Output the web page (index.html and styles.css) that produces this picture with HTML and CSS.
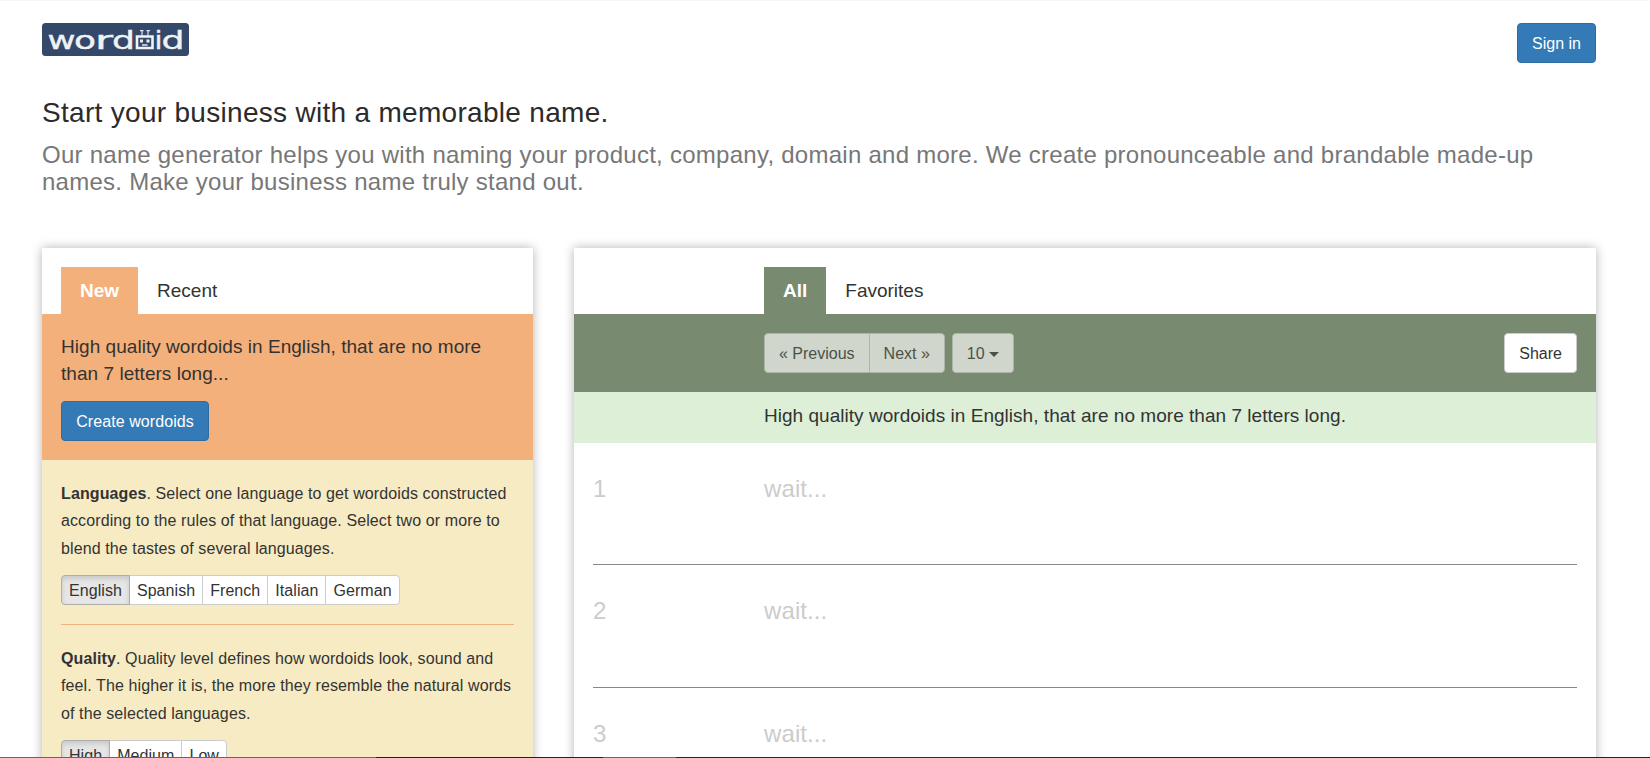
FILE: index.html
```html
<!DOCTYPE html>
<html lang="en">
<head>
<meta charset="utf-8">
<title>Wordoid</title>
<link rel="stylesheet" href="styles.css">
</head>
<body>
<div class="page">
  <header class="header">
    <svg class="logo" width="148" height="34" viewBox="0 0 148 34" role="img" aria-label="wordoid">
      <rect width="147" height="33" rx="3.5" fill="#34496a"/>
      <g class="logo-text">
        <text x="5.5" y="26" textLength="28" lengthAdjust="spacingAndGlyphs">w</text>
        <text x="32" y="26" textLength="22" lengthAdjust="spacingAndGlyphs">o</text>
        <text x="53" y="26" textLength="18" lengthAdjust="spacingAndGlyphs">r</text>
        <text x="70" y="26" textLength="23" lengthAdjust="spacingAndGlyphs">d</text>
        <text x="112.500" y="26" textLength="8" lengthAdjust="spacingAndGlyphs">i</text>
        <text x="119.500" y="26" textLength="23" lengthAdjust="spacingAndGlyphs">d</text>
      </g>
      <g class="robot">
        <path d="M95 13.500H110.500V25H95Z" fill="none" stroke="#f0f2f5" stroke-width="2.600"/>
        <path d="M98 7.700h3.500M104.500 7.700h3.500M100 8v5M106 8v5" fill="none" stroke="#dfe4ea" stroke-width="1.200"/>
        <path d="M98 16.500h3v3h-3zM104.500 16.500h3v3h-3zM100 21.300h5.500v1.500h-5.500z" fill="#e8ebef"/>
      </g>
    </svg>
    <button class="btn btn-primary">Sign in</button>
  </header>
  <section class="intro">
    <h1>Start your business with a memorable name.</h1>
    <h2>Our name generator helps you with naming your product, company, domain and more. We create pronounceable and brandable made-up names. Make your business name truly stand out.</h2>
  </section>
  <main class="columns">
    <section class="panel creator">
      <nav class="tabs"><a class="tab active">New</a><a class="tab">Recent</a></nav>
      <div class="summary">
        <p>High quality wordoids in English, that are no more than 7 letters long...</p>
        <button class="btn btn-primary">Create wordoids</button>
      </div>
      <div class="options">
        <div class="option">
          <p><b>Languages</b>. Select one language to get wordoids constructed according to the rules of that language. Select two or more to blend the tastes of several languages.</p>
          <div class="group small"><button class="btn pressed">English</button><button class="btn">Spanish</button><button class="btn">French</button><button class="btn">Italian</button><button class="btn">German</button></div>
        </div>
        <div class="option">
          <p><b>Quality</b>. Quality level defines how wordoids look, sound and feel. The higher it is, the more they resemble the natural words of the selected languages.</p>
          <div class="group small"><button class="btn pressed">High</button><button class="btn">Medium</button><button class="btn">Low</button></div>
        </div>
      </div>
    </section>
    <section class="panel results">
      <nav class="tabs"><a class="tab active">All</a><a class="tab">Favorites</a></nav>
      <div class="toolbar">
        <div class="group disabled"><button class="btn">« Previous</button><button class="btn">Next »</button></div>
        <button class="btn disabled">10 <span class="caret"></span></button>
        <button class="btn share">Share</button>
      </div>
      <div class="caption">High quality wordoids in English, that are no more than 7 letters long.</div>
      <div class="list">
        <div class="row"><span>1</span><span>wait...</span></div>
        <div class="row"><span>2</span><span>wait...</span></div>
        <div class="row"><span>3</span><span>wait...</span></div>
      </div>
    </section>
  </main>
</div>
<div class="bottom-edge"></div>
</body>
</html>
```
FILE: styles.css
```css
* { box-sizing: border-box; }
html, body { height: 758px; overflow: hidden; }
body { margin: 0; background: #fff; color: #333; font: 16px/27px "Liberation Sans", Arial, sans-serif; }
p, h1, h2 { margin: 0; font-weight: normal; }
.page { height: 757px; overflow: hidden; border-top: 1px solid #f7f7f7; padding: 22px 54px 0 42px; }
.header { display: flex; justify-content: space-between; align-items: flex-start; height: 73px; }
.logo { display: block; }
.logo-text { font: 25px "DejaVu Sans", sans-serif; fill: #f0f2f5; stroke: #f0f2f5; stroke-width: .4px; }
.btn { height: 40px; padding: 1px 14px 0; border: 1px solid #ccc; border-radius: 4px; background: #fff; color: #333; font: 16px/25px "Liberation Sans", Arial, sans-serif; white-space: nowrap; }
.btn-primary { background: #337ab7; border-color: #2e6da4; color: #fff; }
.summary .btn { width: 148px; padding: 1px 0 0; letter-spacing: .08px; }
.intro h1 { font-size: 28px; line-height: 34px; letter-spacing: .3px; color: #2b2b2b; }
.intro h2 { margin-top: 11px; font-size: 24px; line-height: 27px; letter-spacing: .26px; color: #777; }
.columns { display: grid; grid-template-columns: 491px 1022px; gap: 41px; margin-top: 53px; }
.panel { height: 620px; background: #fff; box-shadow: 0 0 10px rgba(0, 0, 0, .3); }
.tabs { display: flex; height: 66px; padding: 19px 19px 0; font-size: 19px; }
.results .tabs { padding-left: 190px; }
.tab { height: 47px; padding: 0 19px; line-height: 48px; }
.active { color: #fff; font-weight: bold; }
.creator .active { background: #f4b07a; }
.results .active { background: #788a6f; }
.summary { height: 146px; padding: 19px; background: #f4b07a; font-size: 19px; letter-spacing: .04px; }
.summary p { margin-bottom: 14px; }
.options { height: 420px; padding: 20px 19px; background: #f7ebc3; }
.option { height: 145px; border-bottom: 1px solid #f4b07a; margin-bottom: 20px; }
.option p { height: 81px; margin-bottom: 14px; line-height: 27.3px; letter-spacing: .105px; }
.group { display: flex; }
.group .btn + .btn { margin-left: -1px; border-top-left-radius: 0; border-bottom-left-radius: 0; }
.group .btn:not(:last-child) { border-top-right-radius: 0; border-bottom-right-radius: 0; }
.small .btn { height: 30px; padding: 1px 7px 0; letter-spacing: .06px; }
.group .pressed { position: relative; background: #e6e6e6; border-color: #adadad; box-shadow: inset 0 3px 5px rgba(0, 0, 0, .125); }
.toolbar { display: flex; gap: 7px; height: 78px; padding: 19px 19px 19px 190px; background: #788a6f; }
.disabled { opacity: .65; }
.share { margin-left: auto; }
.caret { display: inline-block; vertical-align: middle; border-top: 5px solid; border-left: 5px solid transparent; border-right: 5px solid transparent; }
.caption { height: 51px; padding-left: 190px; background: #ddefd7; font-size: 19px; line-height: 47px; letter-spacing: .03px; }
.list { padding: 0 19px; }
.row { display: grid; grid-template-columns: 171px 1fr; height: 123px; padding-top: 32px; border-bottom: 1px solid #888; color: #ccc; font-size: 24px; line-height: 28px; letter-spacing: .1px; }
.row:first-child { height: 122px; }
.bottom-edge { height: 1px; background: linear-gradient(90deg, #666 376px, #241f20 376px, #241f20 603px, #666 603px, #666 676px, #2a2220 676px, #3a2c28 1000px, #222 1150px); }
```
